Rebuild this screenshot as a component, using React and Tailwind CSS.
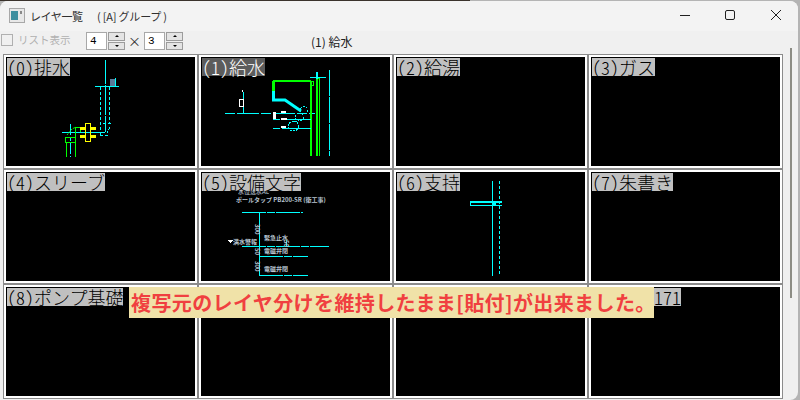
import React from "react";

const jp = "font-['Noto_Sans_CJK_JP','Noto_Sans',sans-serif]";

/* ---------------- LAYER DRAWINGS ---------------- */
const Drain = () => (
  <svg width="189" height="109" className="absolute left-0 top-0" fill="none" shapeRendering="crispEdges">
    <g stroke="#00ffff">
      <path d="M99.5 3V75" strokeDasharray="24 1 30 1" />
      <path d="M89 29.5H113" />
      <path d="M94.5 30V78" strokeDasharray="3 2" />
      <path d="M103.5 30V67" strokeDasharray="3 2" />
      <path d="M56 75.5H99" />
      <path d="M64.5 67V100" strokeDasharray="11 2 4 2" />
      <path d="M97 66.500H105M104 70l-3 6M94 78.500H104" strokeDasharray="3 2" />
      <path d="M109.500 21V29" />
    </g>
    <path d="M104 22h5v7h-5z" fill="#5a7a9a" />
    <g stroke="#00ff00">
      <path d="M60.500 100V85M69.500 100V70H74V75" />
      <path d="M59.500 80.500h10v5h-10z" />
      <path d="M61 78l5-6 4-2" shapeRendering="auto" strokeDasharray="2 1" />
    </g>
    <path d="M79.500 66.500h5v18h-5z" stroke="#ffff00" />
    <path d="M74 70h5v3h-5zM85 70h5v3h-5zM74 78h5v3h-5zM85 78h5v3h-5z" fill="#ffff00" />
  </svg>
);

const Supply = () => (
  <svg width="189" height="109" className="absolute left-0 top-0" fill="none" shapeRendering="crispEdges">
    {/* left stub */}
    <path d="M24 56.500H114" stroke="#00ffff" strokeDasharray="10 2 22 2" />
    <path d="M42.500 35V56" stroke="#00ffff" />
    <path d="M38.500 42.500h4v7h-4z" stroke="#fff" />
    <path d="M41 33h1v2h-1z" fill="#fff" />

    {/* risers */}
    <path d="M72 24H110" stroke="#00ff00" strokeWidth="2" />
    <path d="M72.500 24V34" stroke="#00ff00" strokeWidth="3" />
    <path d="M72.500 34V43H84L100 54" stroke="#00ffff" strokeWidth="3" shapeRendering="auto" />
    <path d="M110 25v74" stroke="#00ff00" strokeWidth="2" />
    <path d="M109.500 24.500h3v4h-3z" stroke="#00ff00" />
    <path d="M116 22v77" stroke="#00ff00" strokeWidth="2" />
    <path d="M118.500 22v77M114.500 21.500h4v4" stroke="#00ff00" />
    <path d="M109 20.500h16" stroke="#00ffff" />
    <path d="M116 15v7" stroke="#00ffff" strokeWidth="2" />
    <path d="M128.500 13v86" stroke="#00ffff" strokeDasharray="26 1" />

    {/* branches */}
    <path d="M72 62.500H110M72 71.500H110" stroke="#00ffff" strokeDasharray="7 2 60 1" />
    <path d="M72 55h3v7h-3z" fill="#fff" />
    <path d="M80 54h5v2h-5zM80 61h6v2h-6zM80 69h5v2h-5z" fill="#fff" />
    <circle cx="103" cy="53" r="3.500" stroke="#00ffff" strokeDasharray="2 1" />
    <circle cx="98.500" cy="60" r="4" stroke="#00ffff" strokeDasharray="2 1" />
    <circle cx="92.500" cy="69" r="5" stroke="#00ffff" strokeDasharray="2 1" />
  </svg>
);

const Notes = () => {
  const note = "text-[6px] leading-[8px] font-bold text-[#b8c4d0] whitespace-nowrap absolute";
  const side = "text-[6px] leading-[6px] font-bold text-[#b8c4d0] absolute [writing-mode:vertical-rl]";
  return (
    <>
      <svg width="189" height="109" className="absolute left-0 top-0" fill="none" shapeRendering="crispEdges">
        <g stroke="#00ffff">
          <path d="M41 40.500H102" strokeDasharray="24 1 8 1" />
          <path d="M41 74.500H128" strokeDasharray="24 1 8 1" />
          <path d="M58 84.500H107" strokeDasharray="24 1 8 1" />
          <path d="M58 103.500H107" strokeDasharray="24 1 8 1" />
          <path d="M58.500 40V103" />
        </g>
        <path d="M27 68h5l-2.500 3z" fill="#fff" />
        <path d="M85.500 68v6" stroke="#00ffff" />
      </svg>
      {/* only the lower edge of this line shows below the label */}
      <div className="absolute left-[37px] top-[19px] h-[4px] overflow-hidden">
        <div className="-mt-[3px] text-[6px] leading-[8px] font-bold text-[#8c98a4] whitespace-nowrap">水位送水AL</div>
      </div>
      <span className={`${note} left-[35px] top-[24px]`}>ポールタップ PB200-SR (衛工事)</span>
      <span className={`${note} left-[32px] top-[66px]`}>満水警報</span>
      <span className={`${note} left-[63px] top-[62px]`}>緊急止水</span>
      <span className={`${note} left-[63px] top-[75px]`}>電磁弁閉</span>
      <span className={`${note} left-[63px] top-[93px]`}>電磁弁閉</span>
      <span className={`${side} left-[53px] top-[52px]`}>300</span>
      <span className={`${side} left-[53px] top-[76px]`}>50</span>
      <span className={`${side} left-[53px] top-[89px]`}>300</span>
      <span className={`${side} left-[82px] top-[68px]`}>50</span>
    </>
  );
};

const Support = () => (
  <svg width="189" height="109" className="absolute left-0 top-0" fill="none" shapeRendering="crispEdges">
    <path d="M96.500 9V104" stroke="#00ffff" />
    <path d="M103.500 9V104" stroke="#00ffff" strokeDasharray="3 2" />
    <path d="M74 29h32v2H74z" fill="#00ffff" />
    <path d="M74.500 31v2.500h31" stroke="#00ffff" />
    <path d="M97 30h3v3h-3z" fill="#00ffff" />
  </svg>
);

const layers = [
  { name: "(0)排水", art: <Drain /> },
  { name: "(1)給水", art: <Supply />, active: true },
  { name: "(2)給湯" },
  { name: "(3)ガス" },
  { name: "(4)スリーブ" },
  { name: "(5)設備文字", art: <Notes /> },
  { name: "(6)支持", art: <Support /> },
  { name: "(7)朱書き" },
  { name: "(8)ポンプ基礎" },
  { name: "" },
  { name: "" },
  { name: "171", pos: "left-[63px]" },
];

const LayerCell = ({ name, art, active, pos = "left-[1px]" }) => (
  <div className="h-[115px] border border-[#8c8c8c] bg-white p-[2px]">
    <div className={`relative h-[109px] bg-black ${jp}`}>
      {art}
      {name && (
        <span
          className={`absolute top-[1px] h-[18px] text-[18px] leading-[18px] font-light whitespace-nowrap [font-feature-settings:"hwid"] ${pos} ${
            active ? "bg-[#5c5c5c] text-white" : "bg-[#c0c0c0] text-black"
          }`}
        >
          {name}
        </span>
      )}
    </div>
  </div>
);

const Spinner = ({ value }) => (
  <div className="flex items-center gap-px">
    <div className="w-[21px] h-[18px] bg-white border border-[#a8a8a8] pl-[3px] text-[11px] leading-[16px] text-black font-['Liberation_Mono',monospace]">
      {value}
    </div>
    <div className="w-[17px] h-[18px] flex flex-col gap-px">
      <div className="flex-1 bg-[#e4e4e4] border border-[#9c9c9c] flex items-center justify-center">
        <div className="w-0 h-0 border-x-[2px] border-x-transparent border-b-[2px] border-b-black" />
      </div>
      <div className="flex-1 bg-[#e4e4e4] border border-[#9c9c9c] flex items-center justify-center">
        <div className="w-0 h-0 border-x-[2px] border-x-transparent border-t-[2px] border-t-black" />
      </div>
    </div>
  </div>
);

const App = () => {
  return (
    <div className={`w-[800px] h-[400px] overflow-hidden bg-[#b4b4b4] relative ${jp}`}>
      <div className="w-[470px] h-px bg-[#3a322c]" />
      <div className="w-[798px] h-[399px] bg-[#f0f0f0] rounded-t-lg rounded-br-lg overflow-hidden">

        {/* Title bar */}
        <div className="h-[30px] bg-[#f3f3f3] flex items-center">
          <svg width="16" height="16" viewBox="0 0 16 16" className="ml-[9px]">
            <rect x="0.5" y="0.5" width="15" height="14" fill="#e8e8e8" stroke="#a8a8a8" />
            <rect x="2" y="3" width="7" height="9" fill="#3f8f9f" />
            <rect x="11" y="3" width="2" height="3" fill="#8a8a8a" />
          </svg>
          <span className="ml-[5px] w-[67px] text-[11px] tracking-[-0.4px] text-[#303030] whitespace-nowrap">レイヤ一覧</span>
          <span className="text-[11px] tracking-[-0.2px] text-[#303030] whitespace-pre">( [A] グループ )</span>
          <div className="ml-auto flex items-center">
            <svg width="46" height="30" viewBox="0 0 46 30" fill="none" stroke="#202020">
              <path d="M20 14.500H30" />
            </svg>
            <svg width="46" height="30" viewBox="0 0 46 30" fill="none" stroke="#202020">
              <rect x="19.500" y="9.500" width="9" height="9" rx="1.500" />
            </svg>
            <svg width="46" height="30" viewBox="0 0 46 30" fill="none" stroke="#202020">
              <path d="M19 9L29 19M29 9L19 19" />
            </svg>
          </div>
        </div>

        {/* Toolbar */}
        <div className="h-[23px] flex items-start pt-px pl-[1px]">
          <div className="w-[12px] h-[12px] mt-[2px] border border-[#b0b0b0]" />
          <span className="ml-[5px] w-[68px] h-[18px] text-[10.5px] leading-[16px] text-[#b0b0b0] whitespace-nowrap">リスト表示</span>
          <Spinner value="4" />
          <span className="w-[19px] h-[18px] text-center text-[13px] leading-[18px] text-[#303030]">×</span>
          <Spinner value="3" />
          <span className="ml-[128px] mt-[2px] text-[12px] leading-[16px] text-[#202020] whitespace-pre">(1) 給水</span>
        </div>

        <div className="flex pl-[3px]">
          {/* Layer grid */}
          <div className="grid grid-cols-[repeat(4,195px)] w-[780px]">
            {layers.map((layer, i) => (
              <LayerCell key={i} {...layer} />
            ))}
          </div>

          {/* Scrollbar */}
          <div className="relative w-[14px]">
            <div className="absolute left-[7px] -top-[6px] w-[2px] h-[250px] bg-[#8c8c84]" />
          </div>
        </div>
      </div>

      {/* Caption over the grid */}
      <div className="absolute left-[129px] top-[287px] w-[525px] h-[31px] bg-[#f0e2a8] flex items-center pl-[2px] text-[20px] tracking-[0.4px] font-bold text-[#f04040] whitespace-nowrap">
        複写元のレイヤ分けを維持したまま[貼付]が出来ました。
      </div>
    </div>
  );
};

export default App;
